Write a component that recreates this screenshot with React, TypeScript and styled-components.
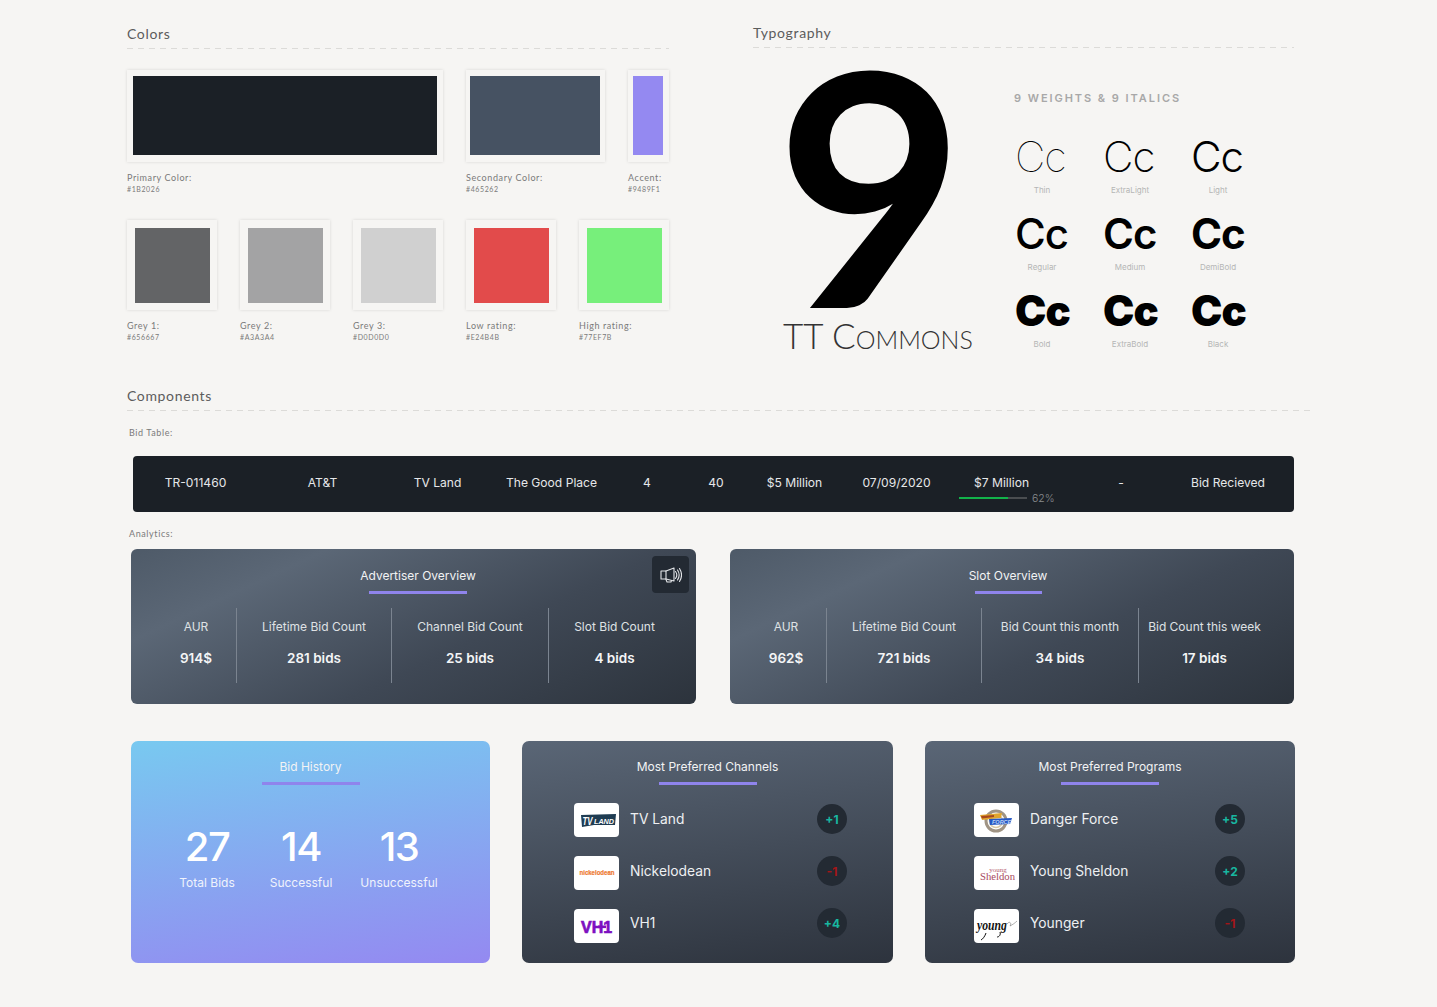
import * as React from 'react';
import styled, { createGlobalStyle } from 'styled-components';

const GlobalStyle = createGlobalStyle`
  html, body {
    margin: 0;
    padding: 0;
    background: #f6f5f3;
  }
`;

const SANS = `Inter, 'Noto Sans', sans-serif`;
const LABEL = `Lato, 'Open Sans', sans-serif`;

const primarySwatches = [
  { label: 'Primary Color:', hex: '#1B2026', color: '#1b2026', w: 316, fill: 304, h: 92, fillH: 79, left: 6, top: 6 },
  { label: 'Secondary Color:', hex: '#465262', color: '#465262', w: 139, fill: 130, h: 92, fillH: 79, left: 4, top: 6 },
  { label: 'Accent:', hex: '#9489F1', color: '#9489f1', w: 41, fill: 30, h: 92, fillH: 79, left: 5, top: 6 },
];

const secondarySwatches = [
  { label: 'Grey 1:', hex: '#656667', color: '#636466' },
  { label: 'Grey 2:', hex: '#A3A3A4', color: '#a3a3a4' },
  { label: 'Grey 3:', hex: '#D0D0D0', color: '#d0d0d0' },
  { label: 'Low rating:', hex: '#E24B4B', color: '#e24b4b' },
  { label: 'High rating:', hex: '#77EF7B', color: '#77ef7b' },
];

const weights = [
  { name: 'Thin', weight: 100 },
  { name: 'ExtraLight', weight: 200 },
  { name: 'Light', weight: 300 },
  { name: 'Regular', weight: 500 },
  { name: 'Medium', weight: 600 },
  { name: 'DemiBold', weight: 700 },
  { name: 'Bold', weight: 900 },
  { name: 'ExtraBold', weight: 900 },
  { name: 'Black', weight: 900 },
];

const tableCells = [
  'TR-011460',
  'AT&T',
  'TV Land',
  'The Good Place',
  '4',
  '40',
  '$5 Million',
  '07/09/2020',
];

const advertiserStats = [
  { label: 'AUR', value: '914$' },
  { label: 'Lifetime Bid Count', value: '281 bids' },
  { label: 'Channel Bid Count', value: '25 bids' },
  { label: 'Slot Bid Count', value: '4 bids' },
];

const slotStats = [
  { label: 'AUR', value: '962$' },
  { label: 'Lifetime Bid Count', value: '721 bids' },
  { label: 'Bid Count this month', value: '34 bids' },
  { label: 'Bid Count this week', value: '17 bids' },
];

const TvLandLogo = () => (
  <svg width="45" height="34" viewBox="0 0 45 34">
    <path d="M7 12 L42 11 L41 22 L20 22 L8 24 Z" fill="#1f3c52" />
    <text x="8.5" y="21.5" fontFamily="Liberation Sans" fontSize="10" fontWeight="700" fontStyle="italic" fill="#fff" textLength="10" lengthAdjust="spacingAndGlyphs">TV</text>
    <text x="20" y="20.5" fontFamily="Liberation Sans" fontSize="8" fontWeight="700" fontStyle="italic" fill="#fff" textLength="20" lengthAdjust="spacingAndGlyphs">LAND</text>
  </svg>
);

const NickLogo = () => (
  <svg width="45" height="34" viewBox="0 0 45 34">
    <text x="5.5" y="19" fontFamily="Liberation Sans" fontSize="6.4" fontWeight="700" fill="#ee7a32" stroke="#ee7a32" strokeWidth="0.2" textLength="35" lengthAdjust="spacingAndGlyphs">nickelodean</text>
  </svg>
);

const Vh1Logo = () => (
  <svg width="45" height="34" viewBox="0 0 45 34">
    <text x="7" y="24" fontFamily="Liberation Sans" fontSize="16.5" fontWeight="700" fill="#7d0fc0" stroke="#7d0fc0" strokeWidth="0.7" textLength="31" lengthAdjust="spacingAndGlyphs">VH1</text>
    <rect x="24" y="16.5" width="8" height="2.6" fill="#7d0fc0" />
  </svg>
);

const DangerForceLogo = () => (
  <svg width="45" height="34" viewBox="0 0 45 34">
    <circle cx="22" cy="18" r="10" fill="none" stroke="#a09484" strokeWidth="3" />
    <circle cx="22" cy="18" r="6.5" fill="none" stroke="#d8c9a8" strokeWidth="1.5" />
    <path d="M6 12 L28 10 L27 15 L8 17 Z" fill="#e0a52e" />
    <path d="M7 13 L20 12 L20 14 L8 15.5 Z" fill="#a8481c" />
    <path d="M15 16 L38 15 L36 21 L16 22 Z" fill="#2557c4" />
    <text x="18" y="20.5" fontFamily="Liberation Sans" fontSize="5.5" fontWeight="700" fontStyle="italic" fill="#bcd3f5">FORCE</text>
  </svg>
);

const SheldonLogo = () => (
  <svg width="45" height="34" viewBox="0 0 45 34">
    <text x="24" y="16" textAnchor="middle" fontFamily="Liberation Serif" fontSize="7" fill="#b5606f">young</text>
    <text x="6" y="24" fontFamily="Liberation Serif" fontSize="11" fill="#a84a5e" textLength="35" lengthAdjust="spacingAndGlyphs">Sheldon</text>
  </svg>
);

const YoungerLogo = () => (
  <svg width="45" height="34" viewBox="0 0 45 34">
    <text x="3" y="21" fontFamily="Liberation Serif" fontSize="14" fontWeight="700" fontStyle="italic" fill="#111" textLength="30" lengthAdjust="spacingAndGlyphs">young</text>
    <path d="M33 15 C36 11 38 15 36 17 C38 16 41 14 43 12" fill="none" stroke="#777" strokeWidth="0.6" />
    <path d="M12 24 C11 27 9 30 7 31 M26 23 C27 26 25 28 23 28" fill="none" stroke="#111" strokeWidth="1" />
  </svg>
);

const SpeakerIcon = () => (
  <svg width="22" height="16" viewBox="0 0 22 16" fill="none" stroke="#e4e6e9" strokeWidth="1.1" strokeLinejoin="round" strokeLinecap="round">
    <path d="M1 4 L6 4 L6 12 L1 12 Z" />
    <path d="M6 4 L14 1 L14 14 L6 12" />
    <path d="M6 12.5 L7 15 L11 15 L11.5 13.5" />
    <path d="M15.5 4.5 C17 6.5 17 9.5 15.5 11.5" />
    <path d="M17.5 3 C19.5 6 19.5 10 17.5 13" />
    <path d="M19.5 1.5 C22 5.5 22 10.5 19.5 14.5" />
  </svg>
);

const channels = [
  { name: 'TV Land', delta: '+1', logo: <TvLandLogo /> },
  { name: 'Nickelodean', delta: '-1', logo: <NickLogo /> },
  { name: 'VH1', delta: '+4', logo: <Vh1Logo /> },
];

const programs = [
  { name: 'Danger Force', delta: '+5', logo: <DangerForceLogo /> },
  { name: 'Young Sheldon', delta: '+2', logo: <SheldonLogo /> },
  { name: 'Younger', delta: '-1', logo: <YoungerLogo /> },
];

const OverviewCard = ({
  title,
  stats,
  width,
  inset,
  barWidth,
  children,
}: {
  title: string;
  stats: { label: string; value: string }[];
  width: number;
  inset: number;
  barWidth: number;
  children?: React.ReactNode;
}) => (
  <Styled.OverviewCard $width={width} $inset={inset}>
    {children}
    <Styled.OverviewInner>
      <Styled.CardHead>
        <Styled.CardTitle>{title}</Styled.CardTitle>
        <Styled.CardBar $width={barWidth} />
      </Styled.CardHead>
      <Styled.StatGrid>
        {stats.map((s) => (
          <Styled.Stat key={s.label}>
            <Styled.StatLabel>{s.label}</Styled.StatLabel>
            <Styled.StatValue>{s.value}</Styled.StatValue>
          </Styled.Stat>
        ))}
      </Styled.StatGrid>
    </Styled.OverviewInner>
  </Styled.OverviewCard>
);

const ListCard = ({
  title,
  items,
  width,
  left,
  right,
}: {
  title: string;
  items: { name: string; delta: string; logo: React.ReactNode }[];
  width: number;
  left: number;
  right: number;
}) => (
  <Styled.ListCard $width={width}>
    <Styled.CardHead>
      <Styled.CardTitle>{title}</Styled.CardTitle>
      <Styled.CardBar $width={98} />
    </Styled.CardHead>
    <Styled.List $left={left} $right={right}>
      {items.map((item) => (
        <Styled.ListRow key={item.name}>
          <Styled.LogoBox>{item.logo}</Styled.LogoBox>
          <Styled.ListName>{item.name}</Styled.ListName>
          <Styled.Badge $negative={item.delta.startsWith('-')}>{item.delta}</Styled.Badge>
        </Styled.ListRow>
      ))}
    </Styled.List>
  </Styled.ListCard>
);

const App = () => (
  <Styled.Page>
    <GlobalStyle />
    <Styled.TopRow>
      <Styled.ColorsSection>
        <Styled.SectionTitle>Colors</Styled.SectionTitle>
        <Styled.Rule />
        <Styled.SwatchRow $top={21}>
          {primarySwatches.map((s) => (
            <Styled.SwatchItem key={s.label} $width={s.w}>
              <Styled.SwatchFrame $h={s.h} $left={s.left} $top={s.top}>
                <Styled.SwatchFill $w={s.fill} $h={s.fillH} $color={s.color} />
              </Styled.SwatchFrame>
              <Styled.SwatchLabel>{s.label}</Styled.SwatchLabel>
              <Styled.SwatchHex>{s.hex}</Styled.SwatchHex>
            </Styled.SwatchItem>
          ))}
        </Styled.SwatchRow>
        <Styled.SwatchRow $top={26}>
          {secondarySwatches.map((s) => (
            <Styled.SwatchItem key={s.label} $width={90}>
              <Styled.SwatchFrame $h={90} $left={8} $top={8}>
                <Styled.SwatchFill $w={75} $h={75} $color={s.color} />
              </Styled.SwatchFrame>
              <Styled.SwatchLabel>{s.label}</Styled.SwatchLabel>
              <Styled.SwatchHex>{s.hex}</Styled.SwatchHex>
            </Styled.SwatchItem>
          ))}
        </Styled.SwatchRow>
      </Styled.ColorsSection>

      <Styled.TypeSection>
        <Styled.SectionTitle>Typography</Styled.SectionTitle>
        <Styled.Rule />
        <Styled.TypeBody>
          <Styled.Specimen>
            <Styled.BigNine>9</Styled.BigNine>
            <Styled.FontName>TT Commons</Styled.FontName>
          </Styled.Specimen>
          <Styled.WeightsPanel>
            <Styled.WeightsTitle>9 WEIGHTS &amp; 9 ITALICS</Styled.WeightsTitle>
            <Styled.WeightsGrid>
              {weights.map((w) => (
                <Styled.WeightCell key={w.name}>
                  <Styled.WeightSample $weight={w.weight}>Cc</Styled.WeightSample>
                  <Styled.WeightName>{w.name}</Styled.WeightName>
                </Styled.WeightCell>
              ))}
            </Styled.WeightsGrid>
          </Styled.WeightsPanel>
        </Styled.TypeBody>
      </Styled.TypeSection>
    </Styled.TopRow>

    <Styled.ComponentsSection>
      <Styled.SectionTitle>Components</Styled.SectionTitle>
      <Styled.Rule />
      <Styled.SubLabel $top={16}>Bid Table:</Styled.SubLabel>
      <Styled.BidTable>
        {tableCells.map((c) => (
          <Styled.BidCell key={c}>{c}</Styled.BidCell>
        ))}
        <Styled.ProgressCell>
          <Styled.ProgressValue>$7 Million</Styled.ProgressValue>
          <Styled.ProgressRow>
            <Styled.ProgressTrack>
              <Styled.ProgressFill style={{ width: '72%' }} />
            </Styled.ProgressTrack>
            <Styled.ProgressPct>62%</Styled.ProgressPct>
          </Styled.ProgressRow>
        </Styled.ProgressCell>
        <Styled.BidCell>-</Styled.BidCell>
        <Styled.BidCell>Bid Recieved</Styled.BidCell>
      </Styled.BidTable>

      <Styled.SubLabel $top={16}>Analytics:</Styled.SubLabel>
      <Styled.OverviewRow>
        <OverviewCard title="Advertiser Overview" stats={advertiserStats} width={565} inset={25} barWidth={98}>
          <Styled.SoundButton>
            <SpeakerIcon />
          </Styled.SoundButton>
        </OverviewCard>
        <OverviewCard title="Slot Overview" stats={slotStats} width={564} inset={16} barWidth={67} />
      </Styled.OverviewRow>

      <Styled.BottomRow>
        <Styled.HistoryCard>
          <Styled.CardHead>
            <Styled.CardTitle>Bid History</Styled.CardTitle>
            <Styled.CardBar $width={98} />
          </Styled.CardHead>
          <Styled.HistoryStats>
            <Styled.HistoryStat $width={94}>
              <Styled.HistoryNumber>27</Styled.HistoryNumber>
              <Styled.HistoryLabel>Total Bids</Styled.HistoryLabel>
            </Styled.HistoryStat>
            <Styled.HistoryStat $width={94}>
              <Styled.HistoryNumber>14</Styled.HistoryNumber>
              <Styled.HistoryLabel>Successful</Styled.HistoryLabel>
            </Styled.HistoryStat>
            <Styled.HistoryStat $width={102}>
              <Styled.HistoryNumber>13</Styled.HistoryNumber>
              <Styled.HistoryLabel>Unsuccessful</Styled.HistoryLabel>
            </Styled.HistoryStat>
          </Styled.HistoryStats>
        </Styled.HistoryCard>
        <ListCard title="Most Preferred Channels" items={channels} width={371} left={52} right={46} />
        <ListCard title="Most Preferred Programs" items={programs} width={370} left={49} right={50} />
      </Styled.BottomRow>
    </Styled.ComponentsSection>
  </Styled.Page>
);

const Styled = {
  Page: styled.div`
    width: 1437px;
    min-height: 1007px;
    box-sizing: border-box;
    padding: 23px 0 0 127px;
    background: #f6f5f3;
    overflow: hidden;
  `,
  TopRow: styled.div`
    display: flex;
    gap: 84px;
    height: 363px;
  `,
  ColorsSection: styled.section`
    width: 542px;
    padding-top: 1px;
  `,
  TypeSection: styled.section`
    width: 541px;
  `,
  SectionTitle: styled.h2`
    margin: 0;
    font-family: ${LABEL};
    font-size: 14px;
    font-weight: 400;
    line-height: 20px;
    letter-spacing: 0.65px;
    color: #5c5c5c;
  `,
  Rule: styled.div`
    height: 1px;
    margin-top: 4px;
    background: repeating-linear-gradient(90deg, #dcdbd8 0 6px, transparent 6px 11px);
  `,
  SwatchRow: styled.div<{ $top: number }>`
    display: flex;
    gap: 23px;
    margin-top: ${(p) => p.$top}px;
  `,
  SwatchItem: styled.div<{ $width: number }>`
    width: ${(p) => p.$width}px;
    white-space: nowrap;
  `,
  SwatchFrame: styled.div<{ $h: number; $left: number; $top: number }>`
    height: ${(p) => p.$h}px;
    box-sizing: border-box;
    padding: ${(p) => p.$top}px 0 0 ${(p) => p.$left}px;
    background: #f6f5f3;
    box-shadow: 0 0 3px rgba(0, 0, 0, 0.13);
    margin-bottom: 10px;
  `,
  SwatchFill: styled.div<{ $w: number; $h: number; $color: string }>`
    width: ${(p) => p.$w}px;
    height: ${(p) => p.$h}px;
    background: ${(p) => p.$color};
  `,
  SwatchLabel: styled.div`
    font-family: ${LABEL};
    font-size: 9px;
    line-height: 12px;
    letter-spacing: 0.6px;
    color: #7a7a7a;
  `,
  SwatchHex: styled.div`
    font-family: ${LABEL};
    font-size: 7px;
    line-height: 10px;
    letter-spacing: 0.6px;
    color: #7a7a7a;
  `,
  TypeBody: styled.div`
    display: flex;
  `,
  Specimen: styled.div`
    width: 261px;
    height: 310px;
    flex: none;
  `,
  BigNine: styled.div`
    font-family: Lato, sans-serif;
    font-size: 325px;
    font-weight: 700;
    line-height: 260px;
    color: #000;
    margin: 4px 0 0 23px;
    height: 260px;
  `,
  FontName: styled.div`
    font-family: Lato, sans-serif;
    font-size: 35px;
    font-weight: 300;
    font-variant: small-caps;
    line-height: 38px;
    color: #333;
    margin: 4px 0 0 30px;
    white-space: nowrap;
  `,
  WeightsPanel: styled.div`
    padding-top: 43px;
  `,
  WeightsTitle: styled.div`
    font-family: ${SANS};
    font-size: 11px;
    font-weight: 600;
    line-height: 14px;
    letter-spacing: 1.95px;
    color: #a8a8a8;
    white-space: nowrap;
  `,
  WeightsGrid: styled.div`
    display: grid;
    grid-template-columns: repeat(3, 54px);
    column-gap: 34px;
    row-gap: 11px;
    margin: 26px 0 0 1px;
  `,
  WeightCell: styled.div`
    display: flex;
    flex-direction: column;
    align-items: center;
  `,
  WeightSample: styled.div<{ $weight: number }>`
    font-family: Inter, sans-serif;
    font-size: 42px;
    line-height: 52px;
    font-weight: ${(p) => p.$weight};
    color: #000;
    letter-spacing: -1px;
    width: 54px;
  `,
  WeightName: styled.div`
    font-family: ${SANS};
    font-size: 8px;
    line-height: 14px;
    color: #b5b5b5;
  `,
  ComponentsSection: styled.section`
    width: 1183px;
  `,
  SubLabel: styled.div<{ $top: number }>`
    margin: ${(p) => p.$top}px 0 0 2px;
    font-family: ${LABEL};
    font-size: 9px;
    line-height: 12px;
    letter-spacing: 0.6px;
    color: #7a7a7a;
  `,
  BidTable: styled.div`
    display: grid;
    grid-template-columns: 125px 129px 101px 127px 64px 74px 83px 121px 102px 124px 90px;
    width: 1161px;
    height: 56px;
    box-sizing: border-box;
    margin: 17px 0 0 6px;
    padding-top: 18px;
    background: #1b2026;
    border-radius: 4px;
  `,
  BidCell: styled.div`
    font-family: ${SANS};
    font-size: 12.1px;
    line-height: 18px;
    text-align: center;
    color: #e6e7e9;
    white-space: nowrap;
  `,
  ProgressCell: styled.div`
    padding-left: 2px;
  `,
  ProgressValue: styled.div`
    font-family: ${SANS};
    font-size: 12.1px;
    line-height: 18px;
    padding-left: 15px;
    color: #e6e7e9;
    white-space: nowrap;
  `,
  ProgressRow: styled.div`
    display: flex;
    align-items: center;
    gap: 5px;
    margin-top: -2px;
    height: 16px;
  `,
  ProgressTrack: styled.div`
    width: 68px;
    height: 2px;
    background: #4a4d50;
  `,
  ProgressFill: styled.div`
    height: 100%;
    background: #12b24a;
  `,
  ProgressPct: styled.span`
    font-family: ${SANS};
    font-size: 10.5px;
    font-weight: 300;
    color: #8a8d90;
  `,
  OverviewRow: styled.div`
    display: flex;
    gap: 34px;
    margin: 9px 0 0 4px;
  `,
  OverviewCard: styled.div<{ $width: number; $inset: number }>`
    position: relative;
    width: ${(p) => p.$width}px;
    height: 155px;
    box-sizing: border-box;
    padding: 18px 0 0 ${(p) => p.$inset}px;
    border-radius: 6px;
    background: linear-gradient(155deg, #4e5a68 0%, #5b6776 22%, #3f4855 60%, #2c333c 100%);
  `,
  OverviewInner: styled.div`
    width: 524px;
  `,
  SoundButton: styled.div`
    position: absolute;
    top: 7px;
    right: 7px;
    width: 37px;
    height: 37px;
    display: flex;
    align-items: center;
    justify-content: center;
    background: #232a33;
    border-radius: 4px;
  `,
  CardHead: styled.div`
    display: flex;
    flex-direction: column;
    align-items: center;
  `,
  CardTitle: styled.div`
    font-family: ${SANS};
    font-size: 12px;
    line-height: 18px;
    color: #f2f3f4;
    white-space: nowrap;
  `,
  CardBar: styled.div<{ $width: number }>`
    width: ${(p) => p.$width}px;
    height: 3px;
    margin-top: 6px;
    background: #8f84ec;
  `,
  StatGrid: styled.div`
    display: grid;
    grid-template-columns: 80px 155px 157px 132px;
    height: 75px;
    margin-top: 14px;
  `,
  Stat: styled.div`
    padding-top: 10px;
    text-align: center;
    border-left: 1px solid #7b8490;
    white-space: nowrap;

    &:first-child {
      border-left: none;
    }
  `,
  StatLabel: styled.div`
    font-family: ${SANS};
    font-size: 12px;
    line-height: 18px;
    color: #dfe1e4;
  `,
  StatValue: styled.div`
    margin-top: 13px;
    font-family: ${SANS};
    font-size: 13.5px;
    font-weight: 600;
    line-height: 18px;
    color: #f4f5f6;
  `,
  BottomRow: styled.div`
    display: flex;
    gap: 32px;
    margin: 37px 0 0 4px;
  `,
  HistoryCard: styled.div`
    width: 359px;
    height: 222px;
    box-sizing: border-box;
    padding-top: 17px;
    border-radius: 7px;
    background: linear-gradient(172deg, #78c9f0 0%, #9489f1 100%);
  `,
  HistoryStats: styled.div`
    display: flex;
    margin: 38px 0 0 29px;
  `,
  HistoryStat: styled.div<{ $width: number }>`
    width: ${(p) => p.$width}px;
    text-align: center;
    white-space: nowrap;
  `,
  HistoryNumber: styled.div`
    font-family: ${SANS};
    font-size: 40px;
    font-weight: 500;
    line-height: 48px;
    color: #fff;
    letter-spacing: -1.5px;
  `,
  HistoryLabel: styled.div`
    margin-top: 3px;
    font-family: ${SANS};
    font-size: 12px;
    line-height: 18px;
    color: #f0f3fc;
  `,
  ListCard: styled.div<{ $width: number }>`
    width: ${(p) => p.$width}px;
    height: 222px;
    box-sizing: border-box;
    padding-top: 17px;
    border-radius: 7px;
    background: linear-gradient(172deg, #5a6676 0%, #2d333d 100%);
  `,
  List: styled.div<{ $left: number; $right: number }>`
    display: flex;
    flex-direction: column;
    gap: 18px;
    margin-top: 18px;
    padding: 0 ${(p) => p.$right}px 0 ${(p) => p.$left}px;
  `,
  ListRow: styled.div`
    display: flex;
    align-items: center;
    height: 34px;

    &:nth-child(2) > div:first-child {
      margin-top: 2px;
    }

    &:nth-child(3) > div:first-child {
      margin-top: 4px;
    }
  `,
  LogoBox: styled.div`
    width: 45px;
    height: 34px;
    flex: none;
    background: #fff;
    border-radius: 4px;
    overflow: hidden;
  `,
  ListName: styled.div`
    flex: 1;
    margin: 0 0 2px 11px;
    font-family: ${SANS};
    font-size: 13.8px;
    line-height: 20px;
    color: #eef0f2;
  `,
  Badge: styled.div<{ $negative: boolean }>`
    width: 30px;
    height: 30px;
    margin-bottom: 2px;
    display: flex;
    align-items: center;
    justify-content: center;
    border-radius: 50%;
    background: #232a33;
    font-family: ${SANS};
    font-size: 12px;
    font-weight: 700;
    color: ${(p) => (p.$negative ? '#a31518' : '#18b7a0')};
  `,
};

export default App;
